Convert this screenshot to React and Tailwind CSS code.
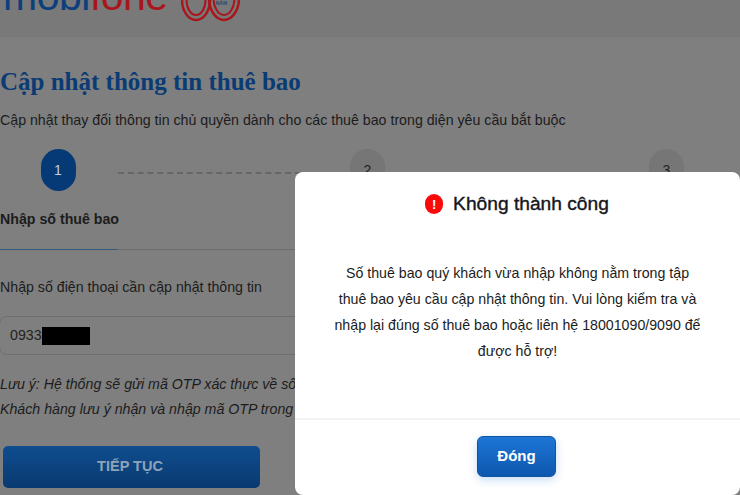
import React from "react";

const Step = ({ num, active }) => (
    <div className={active
        ? "w-[35px] h-[42px] rounded-full bg-[#063a77] text-[#c4ccd6] flex items-center justify-center text-sm shrink-0"
        : "w-[35px] h-[42px] rounded-full bg-[#767676] text-[#222] flex items-center justify-center text-sm shrink-0"}>
        {num}
    </div>
)

const Logo = () => (
    <div className="h-[37px] bg-[#797979] overflow-hidden flex items-start">
        <div className="text-[41px] leading-none mt-[-24px] ml-[3px] tracking-[-0.5px] whitespace-nowrap">
            <span className="text-[#0c3f7c]">mobi</span>
            <span className="text-[#a8161c]">fone</span>
        </div>
        <div className="relative ml-[13px] w-[60px] h-[24px] shrink-0">
            <svg width="60" height="24" viewBox="0 0 60 24" fill="none" stroke="#a8161c">
                <ellipse cx="15" cy="0" rx="14" ry="20" strokeWidth="2.5" />
                <ellipse cx="15" cy="0" rx="9.5" ry="15" strokeWidth="2" />
                <ellipse cx="43" cy="-2" rx="15" ry="22" strokeWidth="2.5" />
                <ellipse cx="43" cy="-2" rx="10.5" ry="17" strokeWidth="2" />
            </svg>
            <span className="absolute left-[35px] top-0 text-[5px] leading-[6px] font-bold text-[#2a4a70]">NĂM</span>
        </div>
    </div>
)

const Modal = () => (
    <div className="absolute left-[295px] top-[172px] w-[445px] h-[323px] bg-white rounded-[8px] flex flex-col">
        <div className="h-[246px] flex flex-col items-center">
            <div className="flex items-center gap-[10px] mt-[19px] ml-[-1px]">
                <div className="w-[18px] h-[20px] rounded-full bg-[#f80a0a] text-white flex items-center justify-center text-[13px] font-bold leading-none">!</div>
                <div className="text-[19.2px] text-[#15171c] leading-[26px] [-webkit-text-stroke:0.4px_#15171c]">Không thành công</div>
            </div>
            <p className="mt-[43px] w-[372px] text-center text-[14.2px] leading-[26px] text-[#1c1c1c]">
                Số thuê bao quý khách vừa nhập không nằm trong tập thuê bao yêu cầu cập nhật thông tin. Vui lòng kiểm tra và nhập lại đúng số thuê bao hoặc liên hệ 18001090/9090 để được hỗ trợ!
            </p>
        </div>
        <div className="border-t-2 border-[#f1f2f4] flex-1 flex justify-center pt-[16px]">
            <button className="w-[79px] h-[41px] ml-[-2px] rounded-[6px] bg-gradient-to-b from-[#1e76d6] to-[#0d57ae] border border-[#0f559f] text-white font-bold text-[15px] shadow-[0_3px_8px_rgba(30,118,214,0.25)]">Đóng</button>
        </div>
    </div>
)

const App = () => {
    return (
        <div className="relative w-[740px] h-[495px] overflow-hidden bg-[#7f7f7f] font-['Liberation_Sans',sans-serif]">
            <Logo />
            <h1 className="mt-[28px] text-[25px] leading-[34px] font-bold text-[#0a3b75] font-['Liberation_Serif',serif]">Cập nhật thông tin thuê bao</h1>
            <p className="mt-[11px] text-[14.2px] leading-[20px] text-[#1c1c1c] whitespace-nowrap">Cập nhật thay đổi thông tin chủ quyền dành cho các thuê bao trong diện yêu cầu bắt buộc</p>
            <div className="flex items-center mt-[19px] h-[42px]">
                <div className="w-[116px] flex justify-center"><Step num="1" active /></div>
                <div className="w-[232px] ml-[2px] border-t-2 border-dashed border-[#666] mt-[6px]"></div>
                <Step num="2" />
                <div className="w-[264px] border-t-2 border-dashed border-[#666] mt-[6px]"></div>
                <Step num="3" />
            </div>
            <div className="mt-[18px] text-[14.2px] leading-[20px] font-bold text-[#1c1c1c] h-[40px]">Nhập số thuê bao</div>
            <div className="h-[1px] bg-[#6d6d6d]">
                <div className="w-[118px] h-[1px] bg-[#35597f]"></div>
            </div>
            <p className="mt-[27px] text-[14.2px] leading-[20px] text-[#1c1c1c]">Nhập số điện thoại cần cập nhật thông tin</p>
            <div className="mt-[19px] h-[39px] w-[340px] ml-[-1px] rounded-[8px] border border-[#6f6f6f] flex items-center pl-[10px] text-[14.2px] text-[#222]">
                0933
                <span className="w-[48px] h-[18px] bg-black"></span>
            </div>
            <div className="mt-[17px] text-[14.2px] leading-[25px] italic text-[#1c1c1c] whitespace-nowrap">
                <p>Lưu ý: Hệ thống sẽ gửi mã OTP xác thực về số thuê bao</p>
                <p>Khách hàng lưu ý nhận và nhập mã OTP trong thời gian quy định</p>
            </div>
            <button className="block mt-[24px] ml-[3px] w-[257px] h-[42px] pr-[3px] rounded-[5px] bg-gradient-to-b from-[#0f4d8f] to-[#093a70] text-[#8fa3b8] font-bold text-[14.5px]">TIẾP TỤC</button>
            <Modal />
        </div>
    )
}

export default App;
